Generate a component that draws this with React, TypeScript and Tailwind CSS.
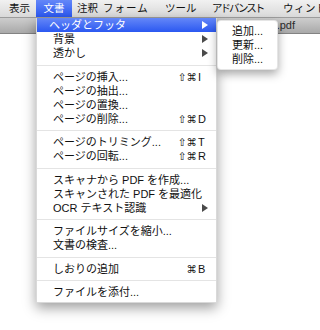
import type { ReactNode } from "react";

type Row =
  | { kind: "sep"; h: string }
  | {
      kind: "item";
      label: ReactNode;
      mod?: string;
      keyChar?: string;
      sub?: boolean;
      active?: boolean;
    };

const rows: Row[] = [
  { kind: "item", label: "ヘッダとフッタ", sub: true, active: true },
  { kind: "item", label: "背景", sub: true },
  { kind: "item", label: "透かし", sub: true },
  { kind: "sep", h: "h-[10px]" },
  { kind: "item", label: "ページの挿入...", mod: "⇧⌘", keyChar: "I" },
  { kind: "item", label: "ページの抽出..." },
  { kind: "item", label: "ページの置換..." },
  { kind: "item", label: "ページの削除...", mod: "⇧⌘", keyChar: "D" },
  { kind: "sep", h: "h-[9px]" },
  { kind: "item", label: "ページのトリミング...", mod: "⇧⌘", keyChar: "T" },
  { kind: "item", label: "ページの回転...", mod: "⇧⌘", keyChar: "R" },
  { kind: "sep", h: "h-[10px]" },
  { kind: "item", label: "スキャナから PDF を作成..." },
  { kind: "item", label: "スキャンされた PDF を最適化" },
  { kind: "item", label: "OCR テキスト認識", sub: true },
  { kind: "sep", h: "h-[9px]" },
  { kind: "item", label: "ファイルサイズを縮小..." },
  { kind: "item", label: "文書の検査..." },
  { kind: "sep", h: "h-[10px]" },
  { kind: "item", label: "しおりの追加", mod: "⌘", keyChar: "B" },
  { kind: "sep", h: "h-[9px]" },
  { kind: "item", label: "ファイルを添付..." },
];

const font = "font-['Liberation_Sans','Noto_Sans_CJK_JP',sans-serif]";
const blue = "bg-[linear-gradient(to_bottom,#6487f8,#2b58f1)]";

function Arrow({ white }: { white?: boolean }) {
  return (
    <svg width="6" height="8" viewBox="0 0 6 8" className="block">
      <path d="M0 0 L6 4 L0 8 Z" fill={white ? "#ffffff" : "#4a4a4a"} />
    </svg>
  );
}

function MenuRow({ row }: { row: Row }) {
  if (row.kind === "sep") {
    return (
      <div className={`${row.h} flex items-center`}>
        <div className="h-px w-full bg-[#e4e4e4]" />
      </div>
    );
  }
  return (
    <div
      className={`flex h-[14px] items-center leading-[14px] ${
        row.active ? `${blue} pl-[12px] text-white` : "pl-[16px] text-[#111]"
      }`}
    >
      <span className="flex-1 whitespace-nowrap">{row.label}</span>
      {row.sub && (
        <span className="pr-[8px]">
          <Arrow white={row.active} />
        </span>
      )}
      {row.keyChar && (
        <span className="flex items-center pr-[7px]">
          <span className="pr-[1px] font-['DejaVu_Sans',sans-serif] text-[10.5px]">
            {row.mod}
          </span>
          <span className="w-[11px] text-[11px]">{row.keyChar}</span>
        </span>
      )}
    </div>
  );
}

export default function App() {
  return (
    <div
      className={`relative h-[330px] w-[320px] overflow-hidden bg-white ${font}`}
    >
      <div className="flex h-[18px] items-center overflow-hidden border-b border-[#9c9c9c] bg-[linear-gradient(to_bottom,#f1f1f1,#d9d9d9)] text-[10.5px] leading-[17px] text-[#111] whitespace-nowrap">
        <span className="w-[36px] shrink-0 pl-[9px]">表示</span>
        <span className={`w-[36px] shrink-0 text-center text-white ${blue}`}>
          文書
        </span>
        <span className="w-[26px] shrink-0 pl-[5px]">注釈</span>
        <span className="w-[62px] shrink-0 pl-[5px] tracking-[1px]">
          フォーム
        </span>
        <span className="w-[48px] shrink-0 pl-[5px]">ツール</span>
        <span className="w-[71px] shrink-0 pl-[4px] tracking-[-2px]">
          アドバンスト
        </span>
        <span className="shrink-0 pl-[4px] tracking-[0.5px]">ウィンドウ</span>
      </div>
      <div className="flex h-[16px] items-center justify-end border-b border-[#838383] bg-[linear-gradient(to_bottom,#cdcdcd,#a9a9a9)] pr-[25px] text-[11px] text-[#2a2a2a]">
        sample.pdf
      </div>

      <div className="absolute left-[36px] top-[18px] w-[181px] border-x border-b border-black/15 bg-white pb-[3px] text-[11px] shadow-[0_5px_12px_rgba(0,0,0,0.38)]">
        {rows.map((r, i) => (
          <MenuRow key={i} row={r} />
        ))}
      </div>

      <div className="absolute left-[217px] top-[20px] w-[61px] rounded-[4px] border border-black/10 bg-white py-[3px] text-[11px] text-[#111] shadow-[0_4px_10px_rgba(0,0,0,0.35)]">
        {["追加...", "更新...", "削除..."].map((t) => (
          <div key={t} className="h-[14px] pl-[14px] leading-[14px]">
            {t}
          </div>
        ))}
      </div>
    </div>
  );
}
